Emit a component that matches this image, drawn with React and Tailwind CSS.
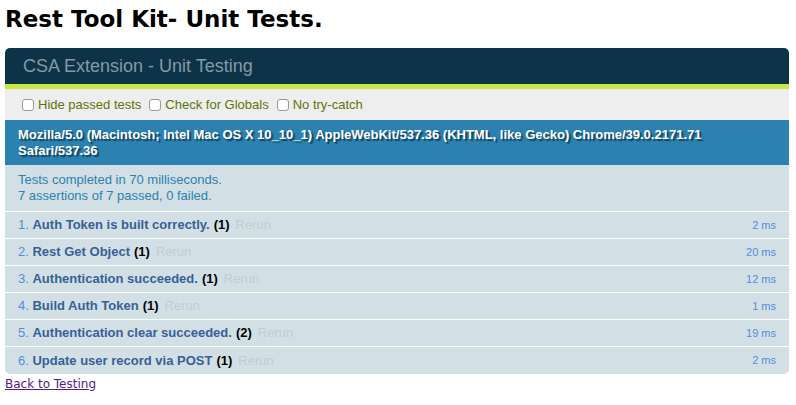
import React from 'react';

const tests = [
    { name: 'Auth Token is built correctly.', count: 1, ms: 2 },
    { name: 'Rest Get Object', count: 1, ms: 20 },
    { name: 'Authentication succeeded.', count: 1, ms: 12 },
    { name: 'Build Auth Token', count: 1, ms: 1 },
    { name: 'Authentication clear succeeded.', count: 2, ms: 19 },
    { name: 'Update user record via POST', count: 1, ms: 2 },
];

function Check({ label }) {
    return (
        <label className="flex items-center gap-[4px] mr-[8px]">
            <span className="w-[12px] h-[12px] rounded-[3px] border border-[#9a9a9a] bg-white inline-block" />
            <span>{label}</span>
        </label>
    );
}

export default function App() {
    return (
        <div className="bg-white w-[796px] h-[405px] px-[5px] font-['Liberation_Sans',Arial,sans-serif]">
            <h1 className="font-['DejaVu_Sans',sans-serif] font-bold text-[23px] leading-[28px] pt-[5px] pb-[15px] text-black">
                Rest Tool Kit- Unit Tests.
            </h1>

            <div className="w-[784px]">
                {/* Header */}
                <div className="bg-[#0d3349] rounded-t-[5px] h-[36px] pl-[18px] flex items-center border-b-[5px] border-[#c6e746] box-content">
                    <span className="text-[18px] text-[#8699a4]">CSA Extension - Unit Testing</span>
                </div>

                {/* Toolbar */}
                <div className="bg-[#eeeeee] h-[31px] pl-[17px] flex items-center text-[13px] text-[#5e740b]">
                    <Check label="Hide passed tests" />
                    <Check label="Check for Globals" />
                    <Check label="No try-catch" />
                </div>

                {/* User agent */}
                <div className="bg-[#2b81af] text-white font-bold text-[13px] leading-[16px] pl-[13px] pr-[10px] pt-[7px] pb-[6px] [text-shadow:rgba(0,0,0,0.5)_2px_2px_1px]">
                    Mozilla/5.0 (Macintosh; Intel Mac OS X 10_10_1) AppleWebKit/537.36 (KHTML, like Gecko) Chrome/39.0.2171.71 Safari/537.36
                </div>

                {/* Result banner */}
                <div className="bg-[#d2e0e6] text-[#2b81af] text-[13px] leading-[16px] pl-[13px] pt-[7px] pb-[7px] border-b border-white">
                    <div>Tests completed in 70 milliseconds.</div>
                    <div>7 assertions of 7 passed, 0 failed.</div>
                </div>

                {/* Tests */}
                <ol className="bg-[#d2e0e6] rounded-b-[5px] overflow-hidden">
                    {tests.map((t, i) => (
                        <li
                            key={i}
                            className="flex items-center h-[27px] pl-[13px] pr-[13px] text-[13px] border-b border-white last:border-b-0"
                        >
                            <span className="text-[#528ce0]">{i + 1}.&nbsp;</span>
                            <strong className="text-[#366097]">{t.name}</strong>
                            <b className="text-black ml-[4px]">({t.count})</b>
                            <span className="text-[#c2ccd1] ml-[6px]">Rerun</span>
                            <span className="ml-auto text-[11px] text-[#528ce0]">{t.ms} ms</span>
                        </li>
                    ))}
                </ol>
            </div>

            <a href="#" className="block mt-[2px] font-['DejaVu_Sans',sans-serif] text-[12px] leading-[16px] text-[#551a8b] underline">
                Back to Testing
            </a>
        </div>
    );
}
